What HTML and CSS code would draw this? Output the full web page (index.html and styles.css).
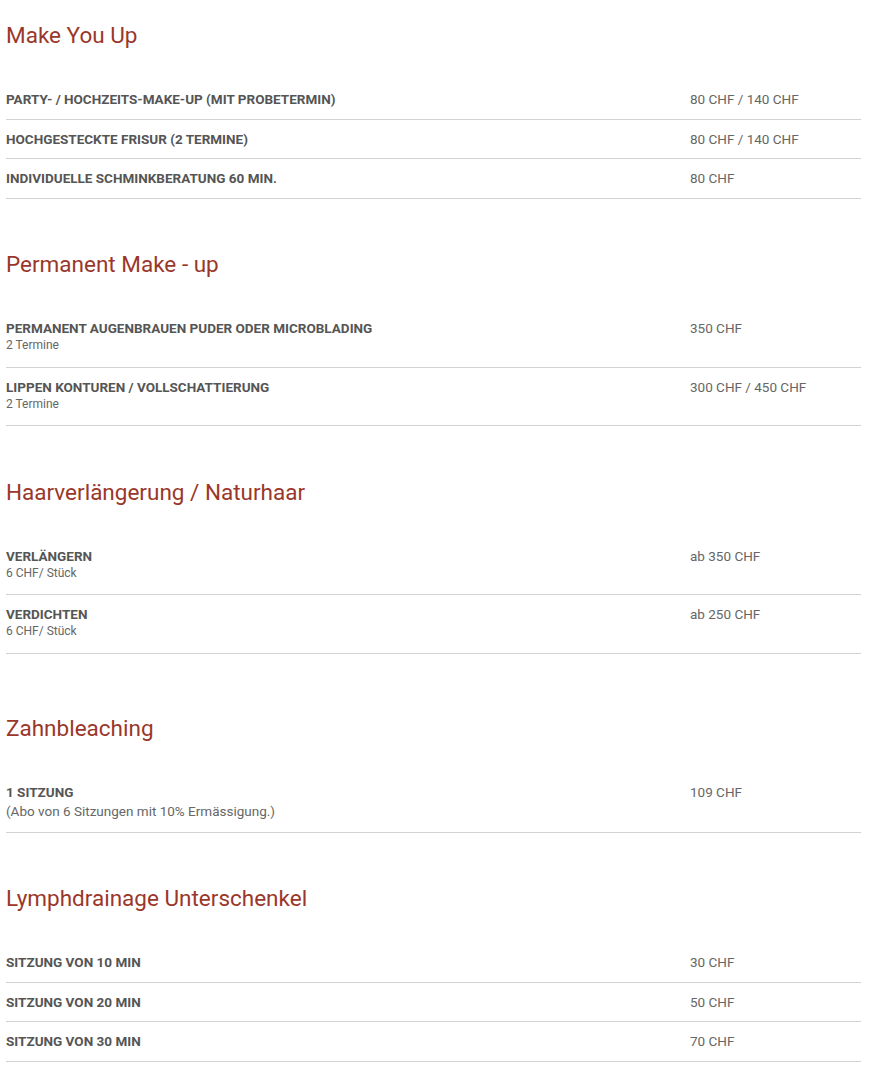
FILE: index.html
```html
<!DOCTYPE html>
<html lang="de">
<head>
<meta charset="utf-8">
<title>Preise</title>
<link rel="stylesheet" href="styles.css">
</head>
<body>
<main class="page">
  <section class="section">
    <h2 class="heading">Make You Up</h2>
    <div class="row"><div class="name"><div class="title">PARTY- / HOCHZEITS-MAKE-UP (MIT PROBETERMIN)</div></div><div class="price">80 CHF / 140 CHF</div></div>
    <div class="row"><div class="name"><div class="title">HOCHGESTECKTE FRISUR (2 TERMINE)</div></div><div class="price">80 CHF / 140 CHF</div></div>
    <div class="row"><div class="name"><div class="title">INDIVIDUELLE SCHMINKBERATUNG 60 MIN.</div></div><div class="price">80 CHF</div></div>
  </section>
  <section class="section">
    <h2 class="heading">Permanent Make - up</h2>
    <div class="row"><div class="name"><div class="title">PERMANENT AUGENBRAUEN PUDER ODER MICROBLADING</div><div class="sub">2 Termine</div></div><div class="price">350 CHF</div></div>
    <div class="row"><div class="name"><div class="title">LIPPEN KONTUREN / VOLLSCHATTIERUNG</div><div class="sub">2 Termine</div></div><div class="price">300 CHF / 450 CHF</div></div>
  </section>
  <section class="section">
    <h2 class="heading">Haarverlängerung / Naturhaar</h2>
    <div class="row"><div class="name"><div class="title">VERLÄNGERN</div><div class="sub">6 CHF/ Stück</div></div><div class="price">ab 350 CHF</div></div>
    <div class="row"><div class="name"><div class="title">VERDICHTEN</div><div class="sub">6 CHF/ Stück</div></div><div class="price">ab 250 CHF</div></div>
  </section>
  <section class="section section-wide">
    <h2 class="heading">Zahnbleaching</h2>
    <div class="row"><div class="name"><div class="title">1 SITZUNG</div><div class="note">(Abo von 6 Sitzungen mit 10% Ermässigung.)</div></div><div class="price">109 CHF</div></div>
  </section>
  <section class="section">
    <h2 class="heading">Lymphdrainage Unterschenkel</h2>
    <div class="row"><div class="name"><div class="title">SITZUNG VON 10 MIN</div></div><div class="price">30 CHF</div></div>
    <div class="row"><div class="name"><div class="title">SITZUNG VON 20 MIN</div></div><div class="price">50 CHF</div></div>
    <div class="row"><div class="name"><div class="title">SITZUNG VON 30 MIN</div></div><div class="price">70 CHF</div></div>
  </section>
</main>
</body>
</html>
```
FILE: styles.css
```css
html, body {
  margin: 0;
  padding: 0;
  background: #fff;
}
body {
  font-family: Roboto, "Liberation Sans", Arial, sans-serif;
  color: #555;
}
.page {
  width: 855px;
  padding: 22px 0 0 6px;
}
.section {
  margin-bottom: 52.5px;
}
.section-wide {
  padding-top: 9px;
}
.heading {
  margin: 0 0 32px;
  font-size: 22.5px;
  line-height: 26px;
  font-weight: 400;
  color: #9a372a;
}
.row {
  display: grid;
  grid-template-columns: 684px 1fr;
  padding: 10px 0 9.5px;
  border-bottom: 1px solid #d2d2d2;
}
.title {
  font-size: 13.5px;
  line-height: 19px;
  font-weight: 700;
  color: #555;
}
.sub {
  font-size: 12px;
  line-height: 14px;
  margin-bottom: 5px;
  color: #666;
}
.note {
  font-size: 13.5px;
  line-height: 18px;
  margin-bottom: 2px;
  color: #666;
}
.price {
  font-size: 13.5px;
  line-height: 19px;
  color: #666;
}
```
